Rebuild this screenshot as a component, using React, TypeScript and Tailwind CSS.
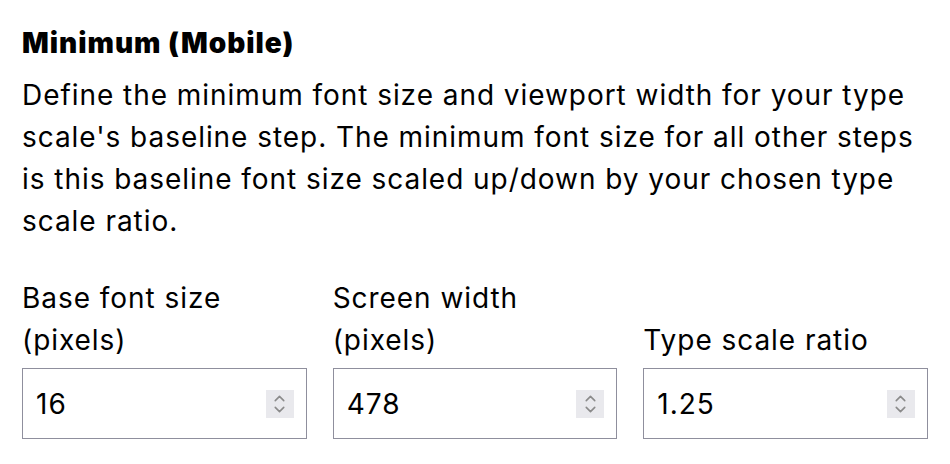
import { ChevronUp, ChevronDown } from "lucide-react";

const fields = [
  { label: "Base font size (pixels)", value: "16" },
  { label: "Screen width (pixels)", value: "478" },
  { label: "Type scale ratio", value: "1.25" },
];

const NumberField = ({ label, value }: { label: string; value: string }) => {
  return (
    <label className="flex flex-col justify-end">
      <span className="pr-6">{label}</span>
      <div className="relative mt-[7px]">
        <input
          readOnly
          value={value}
          className="w-full h-[71px] border border-[#8f8f9d] bg-white px-[13px] text-[28px] tracking-[1px] text-black outline-none"
        />
        {/* spin box */}
        <div className="absolute right-[13px] top-1/2 -translate-y-1/2 w-[28px] h-[28px] bg-[#e9e9ed] flex flex-col items-center justify-center text-[#8a8a8a]">
          <ChevronUp size={17} strokeWidth={2.2} className="-mb-[3px]" />
          <ChevronDown size={17} strokeWidth={2.2} className="-mt-[3px]" />
        </div>
      </div>
    </label>
  );
};

export default function App() {
  return (
    <div className="w-[950px] h-[464px] bg-white px-[22px] pt-[22px] text-[28px] leading-[42px] tracking-[0.95px] text-black font-['Inter',sans-serif]">
      <h2 className="font-black text-[28px] leading-[42px] tracking-[1px] mb-[10px]">Minimum (Mobile)</h2>
      <p>
        Define the minimum font size and viewport width for your type scale's baseline step. The
        minimum font size for all other steps is this baseline font size scaled up/down by your
        chosen type scale ratio.
      </p>

      <div className="grid grid-cols-3 gap-[26px] mt-[35px]">
        {fields.map((f) => (
          <NumberField key={f.label} label={f.label} value={f.value} />
        ))}
      </div>
    </div>
  );
}
